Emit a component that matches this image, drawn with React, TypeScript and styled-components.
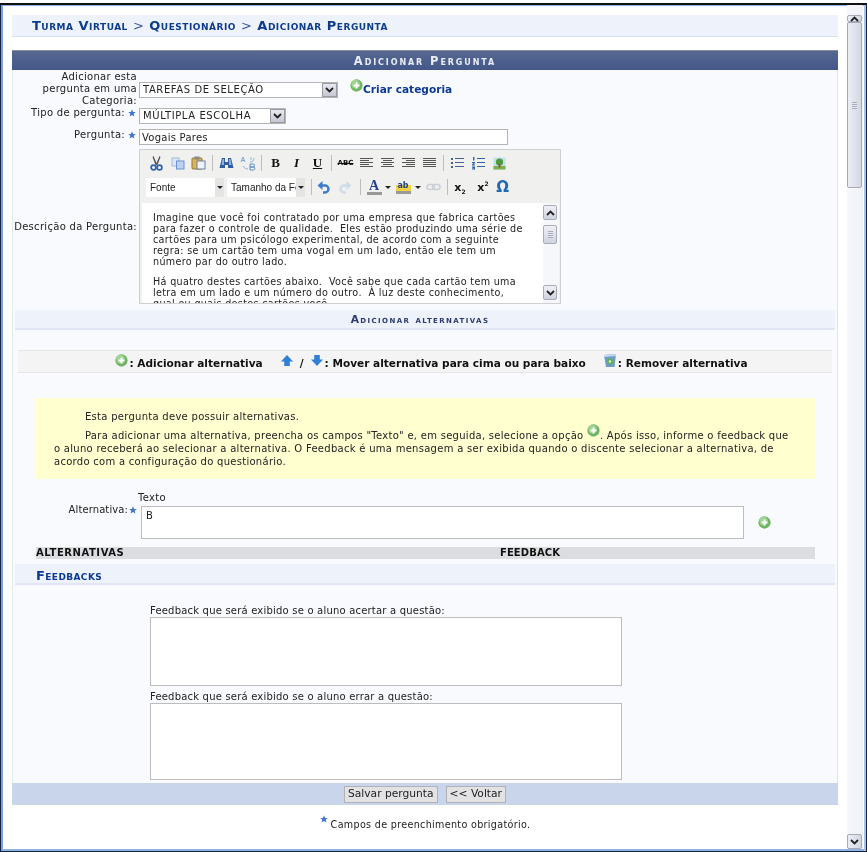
import React from 'react';
import styled, { createGlobalStyle } from 'styled-components';

const GlobalStyle = createGlobalStyle`
  html, body {
    margin: 0;
    padding: 0;
    background: #fff;
  }
  body {
    font-family: 'DejaVu Sans', Verdana, sans-serif;
    font-size: 10px;
    color: #222;
  }
`;

const Window = styled.div`
  box-sizing: border-box;
  width: 867px;
  height: 849px;
  margin-top: 3px;
  display: flex;
  overflow: hidden;
  background: #fff;
  border: 1px solid #14233f;
  border-top: 2px solid #111;
  box-shadow: inset 2px 0 #7ba4d8, inset -2px 0 #a9c3e6, inset 0 -2px #8fb2e0, inset 0 1px #8fb2e0;
  filter: blur(0.3px);
`;

const Content = styled.main`
  width: 834px;
  padding: 10px 0 0 11px;
  flex: none;
`;

const Breadcrumb = styled.h2`
  box-sizing: border-box;
  width: 826px;
  height: 22px;
  margin: 0 0 13px;
  padding: 0 0 0 20px;
  background: #eef3fb;
  border-bottom: 1px solid #d5e0f0;
  color: #0d3c8c;
  font-size: 13px;
  line-height: 22px;
  font-weight: bold;
  font-variant: small-caps;
  letter-spacing: 0.5px;
  white-space: nowrap;
`;

const Chevron = styled.span`
  font-weight: normal;
  color: #33559a;
`;

const PanelTitle = styled.h3`
  box-sizing: border-box;
  width: 826px;
  height: 20px;
  margin: 0;
  background: linear-gradient(#56688f, #44578a);
  border-top: 1px solid #8a8f9c;
  color: #e9edf5;
  font-size: 11.5px;
  line-height: 20px;
  font-weight: bold;
  font-variant: small-caps;
  letter-spacing: 1.9px;
  text-align: center;
`;

const Form = styled.form`
  box-sizing: border-box;
  width: 826px;
  height: 713px;
  background: #f9fafd;
  border-right: 1px solid #dfe4ee;
  border-left: 1px solid #e4e8f0;
`;

const Row = styled.div<{ $height: number; $align?: string }>`
  display: flex;
  height: ${p => p.$height}px;
  align-items: ${p => p.$align || 'flex-start'};
  gap: 2px;
`;

const Label = styled.label`
  width: 124px;
  flex: none;
  text-align: right;
  line-height: 12px;
  letter-spacing: 0.3px;
  color: #222;
  white-space: nowrap;
`;

const Star = styled.svg`
  display: inline-block;
  width: 8px;
  height: 8px;
  margin: 0 1px 0 3px;
  vertical-align: -1px;
`;

const SelectBox = styled.div<{ $width: number }>`
  box-sizing: border-box;
  width: ${p => p.$width}px;
  height: 16px;
  margin-top: ${p => (p.$width > 150 ? 3 : 1)}px;
  display: flex;
  justify-content: space-between;
  align-items: center;
  background: #fff;
  border: 1px solid #b4b4b4;
  padding-left: 3px;
  line-height: 14px;
  letter-spacing: 0.6px;
`;

const SelectArrow = styled.span`
  box-sizing: border-box;
  width: 15px;
  height: 14px;
  display: flex;
  align-items: center;
  justify-content: center;
  background: linear-gradient(#e8e8f0, #c4c6d2);
  border: 1px solid #9a9aa6;
`;

const CreateLink = styled.a`
  margin: -3px 0 0 10px;
  display: flex;
  align-items: flex-start;
  color: #0b3a94;
  font-size: 10.6px;
  font-weight: bold;
  line-height: 12px;
  white-space: nowrap;
`;

const CreateText = styled.span`
  margin-top: 4px;
`;

const TextInput = styled.input`
  box-sizing: border-box;
  width: 369px;
  height: 16px;
  padding: 0 2px;
  margin: 0;
  background: #fff;
  border: 1px solid #b4b4b4;
  font: 10px 'DejaVu Sans', sans-serif;
  letter-spacing: 0.25px;
  color: #222;
`;

const Editor = styled.div`
  box-sizing: border-box;
  width: 422px;
  height: 155px;
  background: #f0f0ee;
  border: 1px solid #cfcfcd;
  padding-top: 3px;
`;

const ToolRow = styled.div<{ $height: number; $offset?: number }>`
  height: ${p => p.$height}px;
  padding: ${p => p.$offset || 0}px 0 0 6px;
  box-sizing: border-box;
  display: flex;
  align-items: center;
`;

const Tool = styled.span<{ $width?: number }>`
  width: ${p => p.$width || 21}px;
  height: 18px;
  flex: none;
  display: flex;
  align-items: center;
  justify-content: center;
  color: #111;
`;

const Separator = styled.span`
  width: 1px;
  height: 16px;
  margin: 0 3px;
  flex: none;
  background: #bdbdbb;
`;

const LetterTool = styled(Tool) <{ $italic?: boolean; $underline?: boolean }>`
  font-family: 'Liberation Serif', serif;
  font-size: 13px;
  font-weight: bold;
  font-style: ${p => (p.$italic ? 'italic' : 'normal')};
  text-decoration: ${p => (p.$underline ? 'underline' : 'none')};
`;

const StrikeTool = styled(Tool)`
  font-size: 7px;
  font-weight: bold;
  text-decoration: line-through;
`;

const ScriptTool = styled(Tool)`
  font-size: 11px;
  font-weight: bold;
  font-family: 'DejaVu Sans', sans-serif;

  sub, sup {
    font-size: 6px;
    line-height: 0;
  }
`;

const OmegaTool = styled(Tool)`
  font-family: 'DejaVu Sans', sans-serif;
  font-size: 15px;
  font-weight: bold;
  color: #2368b0;
`;

const ColorLetter = styled.span<{ $bar: string }>`
  display: block;
  width: 15px;
  color: #26408f;
  font: bold 14px/12px 'Liberation Serif', serif;
  text-align: center;
  border-bottom: 3px solid ${p => p.$bar};
`;

const HighlightLetter = styled(ColorLetter)`
  color: #1c3f8f;
  font: bold 8px/11px 'DejaVu Sans', sans-serif;
  background: linear-gradient(transparent 50%, #f1d340 50%);
`;

const DropCaret = styled.span`
  width: 0;
  height: 0;
  margin: 0 1px;
  flex: none;
  border-left: 3px solid transparent;
  border-right: 3px solid transparent;
  border-top: 3px solid #222;
`;

const Combo = styled.div`
  box-sizing: border-box;
  width: 78px;
  height: 19px;
  margin-right: 3px;
  flex: none;
  display: flex;
  background: #fff;
  overflow: hidden;
  font: 10px/19px 'Liberation Sans', sans-serif;
`;

const ComboText = styled.span`
  flex: 1;
  min-width: 0;
  padding-left: 4px;
  overflow: hidden;
  white-space: nowrap;
`;

const ComboArrow = styled.span`
  width: 9px;
  flex: none;
  display: flex;
  align-items: center;
  justify-content: center;
  background: #e4e4e2;
`;

const EditorBody = styled.div`
  box-sizing: border-box;
  width: 417px;
  height: 100px;
  margin: 4px 0 0 2px;
  display: flex;
  justify-content: space-between;
  overflow: hidden;
  background: #fff;
`;

const EditorText = styled.div`
  padding: 9px 0 0 11px;
  font-size: 9.6px;
  line-height: 11px;
  white-space: nowrap;
  color: #222;
  letter-spacing: 0.33px;

  p {
    margin: 0 0 8.5px;
  }
`;

const MiniScroll = styled.div`
  width: 16px;
  height: 100%;
  padding-top: 2px;
  box-sizing: border-box;
  flex: none;
  display: flex;
  flex-direction: column;
  background: #f6f7fb;
`;

const MiniButton = styled.span`
  box-sizing: border-box;
  width: 14px;
  height: 15px;
  flex: none;
  display: flex;
  align-items: center;
  justify-content: center;
  background: linear-gradient(#f0f0f6, #cfd2e0);
  border: 1px solid #a9abba;
  border-radius: 2px;
`;

const MiniThumb = styled(MiniButton)`
  height: 19px;
  margin: 5px 0 41px;
`;

const SectionBar = styled.h4`
  box-sizing: border-box;
  width: 820px;
  height: 20px;
  margin: 6px 0 20px 2px;
  padding-right: 10px;
  background: #eef2fa;
  border-bottom: 2px solid #e0e6f3;
  color: #2c3a72;
  font-size: 10.7px;
  line-height: 20px;
  font-weight: bold;
  font-variant: small-caps;
  letter-spacing: 1.4px;
  text-align: center;
`;

const Legend = styled.div`
  box-sizing: border-box;
  width: 814px;
  height: 23px;
  margin: 0 0 25px 5px;
  padding: 3px 0 0 13px;
  display: flex;
  justify-content: center;
  align-items: center;
  gap: 17px;
  background: #f4f4f4;
  border-top: 1px solid #e6e6e6;
  border-bottom: 1px solid #e6e6e6;
  color: #111;
  font-size: 10.55px;
  font-weight: bold;
  white-space: nowrap;
`;

const LegendItem = styled.span`
  display: flex;
  align-items: center;
  gap: 1px;
`;

const RaisedIcon = styled.span`
  display: block;
  margin-top: -6px;
`;

const Slash = styled.span`
  margin: 0 5px;
`;

const Note = styled.div`
  box-sizing: border-box;
  width: 779px;
  height: 81px;
  margin: 0 0 13px 23px;
  padding: 12px 20px 0 18px;
  background: #ffffd0;
  line-height: 13px;
  color: #222;
  letter-spacing: 0.28px;

  p {
    margin: 0 0 6px;
    text-indent: 31px;
  }
`;

const InlinePlus = styled.span`
  display: inline-block;
  width: 13px;
  height: 8px;
  vertical-align: 0;

  svg {
    margin-top: -7px;
  }
`;

const TextoCaption = styled.div`
  margin-left: 125px;
  line-height: 12px;
  height: 14px;
  letter-spacing: 0.3px;
`;

const AltLabel = styled(Label)`
  margin: -2px 2px 0 0;
  letter-spacing: 0.1px;

  svg {
    margin: 0 0 0 1px;
  }
`;

const AltArea = styled.textarea<{ $width: number; $height: number }>`
  box-sizing: border-box;
  width: ${p => p.$width}px;
  height: ${p => p.$height}px;
  margin: 0;
  padding: 3px 4px;
  flex: none;
  display: block;
  resize: none;
  background: #fff;
  border: 1px solid #bdbdbd;
  font: 10px 'DejaVu Sans', sans-serif;
  color: #222;
`;

const AddSlot = styled.span`
  margin: 10px 0 0 12px;
`;

const ColumnHeader = styled.div`
  box-sizing: border-box;
  width: 779px;
  height: 12px;
  margin: 9px 0 5px 23px;
  display: grid;
  grid-template-columns: 464px 1fr;
  background: #dcdde0;
  color: #111;
  font-size: 10px;
  line-height: 12px;
  font-weight: bold;
`;

const ColumnName = styled.span<{ $spacing: number }>`
  letter-spacing: ${p => p.$spacing}px;
`;

const FeedbackBar = styled.h4`
  box-sizing: border-box;
  width: 820px;
  height: 21px;
  margin: 0 0 20px 2px;
  padding-left: 21px;
  background: #eef2fa;
  border-bottom: 2px solid #e0e6f3;
  color: #0b3a94;
  font-size: 13px;
  line-height: 23px;
  font-weight: bold;
  font-variant: small-caps;
  letter-spacing: 0.4px;
`;

const FeedbackBlock = styled.div`
  margin: 0 0 5px 137px;
`;

const FeedbackCaption = styled.div`
  height: 12px;
  line-height: 12px;
  letter-spacing: 0.2px;
`;

const Footer = styled.div`
  width: 826px;
  height: 22px;
  display: flex;
  align-items: center;
  justify-content: center;
  gap: 8px;
  box-sizing: border-box;
  background: #c8d5eb;
`;

const Button = styled.button`
  box-sizing: border-box;
  height: 17px;
  padding: 0 3px;
  background: #e2e2e4;
  border: 1px solid #b2b2b6;
  font: 10.7px/14px 'DejaVu Sans', sans-serif;
  color: #222;
`;

const RequiredNote = styled.div`
  width: 826px;
  margin-top: 10px;
  display: flex;
  justify-content: center;
  align-items: flex-start;
  box-sizing: border-box;
  font-size: 9.6px;
  letter-spacing: 0.32px;
  line-height: 14px;

  svg {
    margin: 0;
  }

  span {
    margin: 3px 0 0 3px;
  }
`;

const WindowScroll = styled.div`
  width: 16px;
  margin: 0 0 2px 1px;
  padding-top: 10px;
  box-sizing: border-box;
  flex: none;
  display: flex;
  flex-direction: column;
  background: linear-gradient(90deg, #f6f7fb, #f1f2f8);
`;

const ScrollButton = styled.span<{ $height?: number }>`
  box-sizing: border-box;
  width: 15px;
  height: ${p => p.$height || 7}px;
  flex: none;
  display: flex;
  align-items: center;
  justify-content: center;
  background: linear-gradient(90deg, #eceef5, #d4d7e4);
  border: 1px solid #a7a9b8;
  border-radius: 2px;
`;

const ScrollThumb = styled(ScrollButton)`
  height: 166px;
  margin: 0 0 auto;
`;

const GripLine = styled.span`
  width: 5px;
  height: 7px;
  background: repeating-linear-gradient(#a8aab8 0 1px, #e8e9f0 1px 2px);
`;

function RequiredStar() {
  return (
    <Star viewBox="0 0 10 10" aria-hidden="true">
      <path d="M5 .4 6.3 3.6 9.8 3.8 7.1 6 8 9.5 5 7.6 2 9.5 2.9 6 .2 3.8 3.7 3.6Z" fill="#3f74d0" />
    </Star>
  );
}

function Plus({ size = 13 }: { size?: number }) {
  return (
    <svg width={size} height={size} viewBox="0 0 14 14" aria-hidden="true" style={{ display: 'block', flex: 'none' }}>
      <circle cx="7" cy="7" r="6.6" fill="#71b564" />
      <circle cx="6" cy="5.5" r="4.6" fill="#9fd493" />
      <path d="M6 3.8h2v2.2h2.2v2H8v2.2H6V8H3.8V6H6Z" fill="#fff" />
    </svg>
  );
}

function Caret({ up = false }: { up?: boolean }) {
  return (
    <svg width="9" height="6" viewBox="0 0 9 6" aria-hidden="true">
      <path d={up ? 'M1 5 4.5 1.5 8 5' : 'M1 1 4.5 4.5 8 1'} fill="none" stroke="#222" strokeWidth="1.8" />
    </svg>
  );
}

function Arrow({ down = false }: { down?: boolean }) {
  return (
    <svg width="14" height="13" viewBox="0 0 14 14" aria-hidden="true" style={{ display: 'block' }}>
      <path d={down ? 'M4 1h6v5h3.5L7 13 .5 6H4Z' : 'M7 1l6.5 7H10v5H4V8H.5Z'} fill="#2e80d8" />
    </svg>
  );
}

function Bin() {
  return (
    <svg width="14" height="15" viewBox="0 0 14 15" aria-hidden="true" style={{ display: 'block' }}>
      <path d="M1 2 13 1 11.5 14H3Z" fill="#6d9cc9" />
      <path d="M1 2 13 1 12.7 3 1.3 4Z" fill="#c3d9ee" />
      <circle cx="7" cy="8.5" r="3" fill="#62b04f" />
      <circle cx="7" cy="8.5" r="1.2" fill="#dff0d8" />
    </svg>
  );
}

// Desenhos da barra do editor
function Glyph({ d, color = '#555', width = 15, height = 14 }: { d: string; color?: string; width?: number; height?: number }) {
  return (
    <svg width={width} height={height} viewBox="0 0 15 14" aria-hidden="true">
      <path d={d} fill={color} />
    </svg>
  );
}

const ALIGN_LEFT = 'M1 2h13v1H1ZM1 4h9v1H1ZM1 6h13v1H1ZM1 8h9v1H1ZM1 10h13v1H1Z';
const ALIGN_CENTER = 'M1 2h13v1H1ZM3 4h9v1H3ZM1 6h13v1H1ZM3 8h9v1H3ZM1 10h13v1H1Z';
const ALIGN_RIGHT = 'M1 2h13v1H1ZM5 4h9v1H5ZM1 6h13v1H1ZM5 8h9v1H5ZM1 10h13v1H1Z';
const ALIGN_FULL = 'M1 2h13v1H1ZM1 4h13v1H1ZM1 6h13v1H1ZM1 8h13v1H1ZM1 10h13v1H1Z';

function Cut() {
  return (
    <svg width="13" height="15" viewBox="0 0 13 15" aria-hidden="true">
      <path d="M3.5 0 6.5 7 9.5 0 10.5 1 7.5 9 5.5 9 2.5 1Z" fill="#555" />
      <circle cx="3.5" cy="11.5" r="2.4" fill="none" stroke="#2f62b0" strokeWidth="1.7" />
      <circle cx="9.5" cy="11.5" r="2.4" fill="none" stroke="#2f62b0" strokeWidth="1.7" />
    </svg>
  );
}

function CopyIcon() {
  return (
    <svg width="14" height="13" viewBox="0 0 14 13" aria-hidden="true">
      <rect x="1" y="1" width="7" height="8" fill="#dbe6f6" stroke="#a3b7d6" />
      <rect x="5.5" y="4" width="7.5" height="8" fill="#bcd3f0" stroke="#6f93c8" />
    </svg>
  );
}

function PasteIcon() {
  return (
    <svg width="15" height="14" viewBox="0 0 15 14" aria-hidden="true">
      <rect x="1" y="2" width="10" height="11" rx="1" fill="#d8b45c" stroke="#8f7433" />
      <rect x="3.5" y="0.5" width="5" height="3" fill="#888" />
      <rect x="6" y="5" width="8" height="8" fill="#eef3fb" stroke="#6f7f98" />
    </svg>
  );
}

function Binoculars() {
  return (
    <svg width="15" height="13" viewBox="0 0 15 13" aria-hidden="true">
      <path d="M3 1h3v4h3V1h3l2.5 10h-5.5V8H6v3H.5Z" fill="#2f5da0" />
      <path d="M3.5 2h1.5v6H2.5ZM10 2h1.5l1 6H10Z" fill="#8fb3e0" />
    </svg>
  );
}

function ReplaceIcon() {
  return (
    <svg width="16" height="15" viewBox="0 0 16 15" aria-hidden="true">
      <path d="M1 6 3 1 5 6M2 4.5h2" fill="none" stroke="#7ea5d8" strokeWidth="1" />
      <path d="M11 1v3M14 2c0 3-2 4-4 4M3 10c1 2 3 3 5 3" fill="none" stroke="#8db2de" strokeWidth="1" />
      <path d="M10 8h3a1.4 1.4 0 0 1 0 3h-3ZM10 11h3.4a1.4 1.4 0 0 1 0 3H10Z" fill="none" stroke="#5c8ccb" strokeWidth="1" />
    </svg>
  );
}

function Bullets() {
  return (
    <Glyph
      color="#46608f"
      d="M1 2h2v2H1ZM1 6h2v2H1ZM1 10h2v2H1ZM5 2h9v1H5ZM5 6h9v1H5ZM5 10h9v1H5Z"
    />
  );
}

function Numbers() {
  return (
    <Glyph
      color="#2f62a8"
      d="M2 1h1.4v3.6H2ZM1 6h3v1L2.5 8.4H4v1H1v-1L2.6 7H1ZM1 10.6h3v3H1v-1h2v-.4H1.6v-.6H3v-.2H1ZM6 2h8v1H6ZM6 6h8v1H6ZM6 10h8v1H6Z"
    />
  );
}

function Picture() {
  return (
    <svg width="13" height="13" viewBox="0 0 13 13" aria-hidden="true">
      <rect x="0.5" y="0.5" width="12" height="12" fill="#bfe0ef" />
      <rect x="0.5" y="9" width="12" height="3.5" fill="#7db04d" />
      <circle cx="6.5" cy="5" r="3.6" fill="#4f9a3a" />
      <rect x="5.6" y="7" width="1.8" height="3.5" fill="#8a5a2e" />
    </svg>
  );
}

function Undo({ pale = false }: { pale?: boolean }) {
  const stroke = pale ? '#cfdbe8' : '#3a7cc8';
  return (
    <svg width="14" height="13" viewBox="0 0 14 13" aria-hidden="true" style={pale ? { transform: 'scaleX(-1)' } : undefined}>
      <path d="M3.5 4.5H8a3.5 3.5 0 0 1 0 7H6" fill="none" stroke={stroke} strokeWidth="2.4" />
      <path d="M5.5 0v9L0.5 4.5Z" fill={stroke} />
    </svg>
  );
}

function LinkIcon() {
  return (
    <svg width="15" height="8" viewBox="0 0 15 8" aria-hidden="true">
      <rect x="1" y="1.5" width="7.5" height="5" rx="2.5" fill="none" stroke="#ccd0d6" strokeWidth="1.5" />
      <rect x="6.5" y="1.5" width="7.5" height="5" rx="2.5" fill="none" stroke="#ccd0d6" strokeWidth="1.5" />
    </svg>
  );
}

export default function App() {
  return (
    <>
      <GlobalStyle />
      <Window>
        <Content>
          <Breadcrumb>
            Turma Virtual <Chevron>&gt;</Chevron> Questionário <Chevron>&gt;</Chevron> Adicionar Pergunta
          </Breadcrumb>
          <PanelTitle>Adicionar Pergunta</PanelTitle>
          <Form>
            <Row $height={37} $align="center">
              <Label>Adicionar esta<br />pergunta em uma<br />Categoria:</Label>
              <SelectBox $width={199}>
                TAREFAS DE SELEÇÃO
                <SelectArrow><Caret /></SelectArrow>
              </SelectBox>
              <CreateLink>
                <Plus />
                <CreateText>Criar categoria</CreateText>
              </CreateLink>
            </Row>
            <Row $height={22}>
              <Label>Tipo de pergunta:<RequiredStar /></Label>
              <SelectBox $width={147}>
                MÚLTIPLA ESCOLHA
                <SelectArrow><Caret /></SelectArrow>
              </SelectBox>
            </Row>
            <Row $height={20}>
              <Label>Pergunta:<RequiredStar /></Label>
              <TextInput readOnly value="Vogais Pares" />
            </Row>
            <Row $height={155} $align="center">
              <Label>Descrição da Pergunta:</Label>
              <Editor>
                <ToolRow $height={20}>
                  <Tool><Cut /></Tool>
                  <Tool><CopyIcon /></Tool>
                  <Tool><PasteIcon /></Tool>
                  <Separator />
                  <Tool><Binoculars /></Tool>
                  <Tool><ReplaceIcon /></Tool>
                  <Separator />
                  <LetterTool>B</LetterTool>
                  <LetterTool $italic>I</LetterTool>
                  <LetterTool $underline>U</LetterTool>
                  <Separator />
                  <StrikeTool>ABC</StrikeTool>
                  <Tool><Glyph d={ALIGN_LEFT} /></Tool>
                  <Tool><Glyph d={ALIGN_CENTER} /></Tool>
                  <Tool><Glyph d={ALIGN_RIGHT} /></Tool>
                  <Tool><Glyph d={ALIGN_FULL} /></Tool>
                  <Separator />
                  <Tool><Bullets /></Tool>
                  <Tool><Numbers /></Tool>
                  <Tool><Picture /></Tool>
                </ToolRow>
                <ToolRow $height={26} $offset={2}>
                  <Combo>
                    <ComboText>Fonte</ComboText>
                    <ComboArrow><DropCaret /></ComboArrow>
                  </Combo>
                  <Combo>
                    <ComboText>Tamanho da Fonte</ComboText>
                    <ComboArrow><DropCaret /></ComboArrow>
                  </Combo>
                  <Separator />
                  <Tool $width={18}><Undo /></Tool>
                  <Tool $width={24}><Undo pale /></Tool>
                  <Separator />
                  <Tool $width={20}><ColorLetter $bar="#999">A</ColorLetter></Tool>
                  <DropCaret />
                  <Tool $width={22}><HighlightLetter $bar="#999">ab</HighlightLetter></Tool>
                  <DropCaret />
                  <Tool $width={22}><LinkIcon /></Tool>
                  <Separator />
                  <ScriptTool $width={18}><span>x<sub>2</sub></span></ScriptTool>
                  <ScriptTool $width={28}><span>x<sup>2</sup></span></ScriptTool>
                  <OmegaTool $width={11}>Ω</OmegaTool>
                </ToolRow>
                <EditorBody>
                  <EditorText>
                    <p>
                      Imagine que você foi contratado por uma empresa que fabrica cartões<br />
                      para fazer o controle de qualidade.&nbsp; Eles estão produzindo uma série de<br />
                      cartões para um psicólogo experimental, de acordo com a seguinte<br />
                      regra: se um cartão tem uma vogal em um lado, então ele tem um<br />
                      número par do outro lado.
                    </p>
                    <p>
                      Há quatro destes cartões abaixo.&nbsp; Você sabe que cada cartão tem uma<br />
                      letra em um lado e um número do outro.&nbsp; À luz deste conhecimento,<br />
                      qual ou quais destes cartões você
                    </p>
                  </EditorText>
                  <MiniScroll>
                    <MiniButton><Caret up /></MiniButton>
                    <MiniThumb><GripLine /></MiniThumb>
                    <MiniButton><Caret /></MiniButton>
                  </MiniScroll>
                </EditorBody>
              </Editor>
            </Row>
            <SectionBar>Adicionar alternativas</SectionBar>
            <Legend>
              <LegendItem><RaisedIcon><Plus /></RaisedIcon>: Adicionar alternativa</LegendItem>
              <LegendItem>
                <RaisedIcon><Arrow /></RaisedIcon><Slash>/</Slash><RaisedIcon><Arrow down /></RaisedIcon>: Mover alternativa para cima ou para baixo
              </LegendItem>
              <LegendItem><RaisedIcon><Bin /></RaisedIcon>: Remover alternativa</LegendItem>
            </Legend>
            <Note>
              <p>Esta pergunta deve possuir alternativas.</p>
              <p>
                Para adicionar uma alternativa, preencha os campos "Texto" e, em seguida, selecione a opção{' '}
                <InlinePlus><Plus /></InlinePlus>. Após isso, informe o feedback que o aluno receberá ao selecionar a
                alternativa. O Feedback é uma mensagem a ser exibida quando o discente selecionar a alternativa, de
                acordo com a configuração do questionário.
              </p>
            </Note>
            <TextoCaption>Texto</TextoCaption>
            <Row $height={32}>
              <AltLabel>Alternativa:<RequiredStar /></AltLabel>
              <AltArea readOnly value="B" $width={603} $height={33} />
              <AddSlot><Plus /></AddSlot>
            </Row>
            <ColumnHeader>
              <ColumnName $spacing={0.55}>ALTERNATIVAS</ColumnName>
              <ColumnName $spacing={0.1}>FEEDBACK</ColumnName>
            </ColumnHeader>
            <FeedbackBar>Feedbacks</FeedbackBar>
            <FeedbackBlock>
              <FeedbackCaption>Feedback que será exibido se o aluno acertar a questão:</FeedbackCaption>
              <AltArea readOnly $width={472} $height={69} />
            </FeedbackBlock>
            <FeedbackBlock>
              <FeedbackCaption>Feedback que será exibido se o aluno errar a questão:</FeedbackCaption>
              <AltArea readOnly $width={472} $height={77} />
            </FeedbackBlock>
          </Form>
          <Footer>
            <Button type="button">Salvar pergunta</Button>
            <Button type="button">&lt;&lt; Voltar</Button>
          </Footer>
          <RequiredNote>
            <RequiredStar />
            <span>Campos de preenchimento obrigatório.</span>
          </RequiredNote>
        </Content>
        <WindowScroll>
          <ScrollButton><Caret up /></ScrollButton>
          <ScrollThumb><GripLine /></ScrollThumb>
          <ScrollButton $height={15}><Caret /></ScrollButton>
        </WindowScroll>
      </Window>
    </>
  );
}
